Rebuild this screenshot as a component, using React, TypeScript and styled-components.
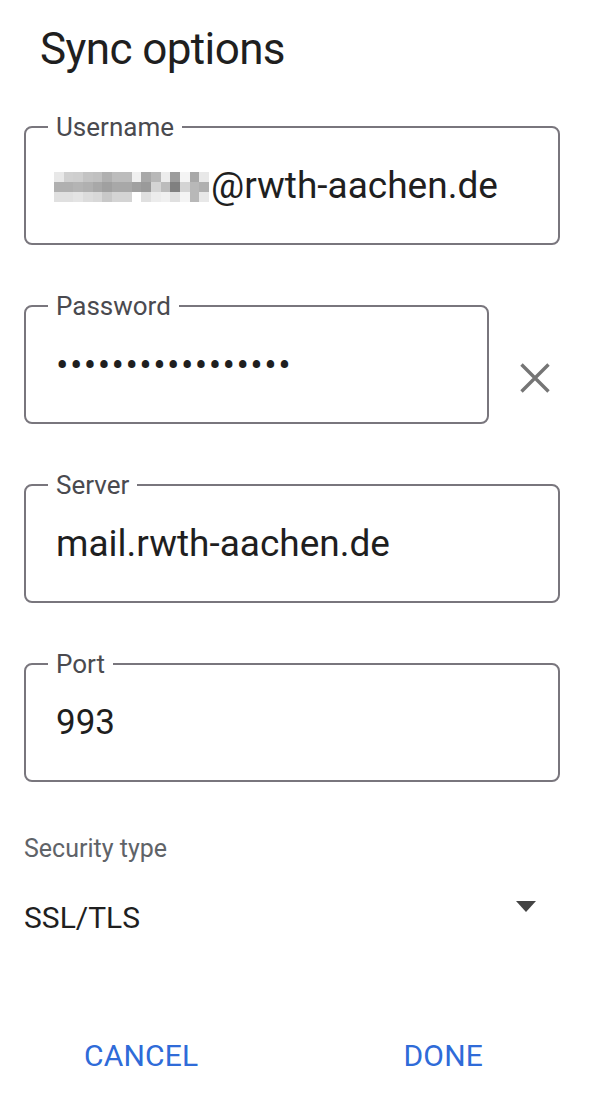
import React from 'react';
import styled, { createGlobalStyle } from 'styled-components';

const GlobalStyle = createGlobalStyle`
	html, body {
		margin: 0;
		padding: 0;
		background: #ffffff;
	}
	body {
		font-family: Roboto, "Noto Sans", "Liberation Sans", sans-serif;
		color: #1f1f1f;
	}
`;

// blurred part of the username, row by row (grey levels)
const pixelRows: string[][] = [
	['e8', 'd0', 'ce', 'c3', 'c0', 'b0', 'bc', 'bc', 'f0', 'a8', 'b8', 'ec', '9c', 'f4', 'a8', 'e8'],
	['b0', 'b0', 'b4', 'b0', 'a8', 'a0', 'a8', 'a8', 'a0', '9a', 'd4', 'bc', '80', 'd4', 'b8', 'b0'],
	['e0', 'e0', 'e4', 'dc', 'd8', 'c8', 'd4', 'd4', 'ff', 'e0', 'ec', 'f0', 'e0', 'f4', 'b8', 'e8'],
];

interface FieldProps {
	label: string;
	children: React.ReactNode;
	narrow?: boolean;
}

const Field = ({ label, children, narrow }: FieldProps): JSX.Element => {
	return (
		<FieldBox $narrow={narrow}>
			<FieldLabel>{label}</FieldLabel>
			<FieldValue>{children}</FieldValue>
		</FieldBox>
	);
};

const App = (): JSX.Element => {
	return (
		<>
			<GlobalStyle />
			<Dialog>
				<Title>Sync options</Title>
				<Fields>
					<Field label="Username">
						<Pixelated>
							{pixelRows.map((row, r) =>
								row.map((g, c) => <Pixel key={`${r}-${c}`} $grey={g} />)
							)}
						</Pixelated>
						@rwth-aachen.de
					</Field>
					<PasswordRow>
						<Field label="Password" narrow>
							<Dots>•••••••••••••••••</Dots>
						</Field>
						<ClearButton aria-label="clear">
							<svg width="32" height="32" viewBox="0 0 32 32">
								<path
									d="M2.5 2.5 L29.5 29.5 M29.5 2.5 L2.5 29.5"
									stroke="#757575"
									strokeWidth="3.4"
									fill="none"
								/>
							</svg>
						</ClearButton>
					</PasswordRow>
					<Field label="Server">mail.rwth-aachen.de</Field>
					<Field label="Port">
						<Digits>993</Digits>
					</Field>
				</Fields>
				<SecurityLabel>Security type</SecurityLabel>
				<SelectRow>
					<SelectValue>SSL/TLS</SelectValue>
					<svg width="20" height="12" viewBox="0 0 20 12">
						<path d="M0 0 L20 0 L10 11 Z" fill="#444444" />
					</svg>
				</SelectRow>
				<Actions>
					<ActionButton>CANCEL</ActionButton>
					<ActionButton>DONE</ActionButton>
				</Actions>
			</Dialog>
		</>
	);
};

export default App;

const Dialog = styled.div`
	width: 592px;
	height: 1098px;
	box-sizing: border-box;
	padding: 26px 32px 0 24px;
	display: flex;
	flex-direction: column;
`;

const Title = styled.h1`
	margin: 0 0 54px 16px;
	font-size: 44px;
	line-height: 46px;
	font-weight: 400;
	letter-spacing: -0.6px;
	color: #1f1f1f;
`;

const Fields = styled.div`
	display: flex;
	flex-direction: column;
	gap: 60px;
`;

const FieldBox = styled.div<{ $narrow?: boolean }>`
	position: relative;
	box-sizing: border-box;
	width: ${(p) => (p.$narrow ? '465px' : '536px')};
	height: 119px;
	border: 2px solid #79767d;
	border-radius: 8px;
	display: flex;
	align-items: center;
	padding: 0 30px;
`;

const FieldLabel = styled.span`
	position: absolute;
	left: 22px;
	top: -16px;
	padding: 0 8px;
	background: #ffffff;
	font-size: 26px;
	line-height: 30px;
	color: #4a4a4f;
`;

const FieldValue = styled.div`
	display: flex;
	align-items: center;
	font-size: 37px;
	line-height: 44px;
	color: #1f1f1f;
	white-space: nowrap;
`;

const Pixelated = styled.span`
	display: inline-grid;
	grid-template-columns: repeat(16, 9.7px);
	grid-auto-rows: 10px;
	margin: 2px 2px 0 -2px;
`;

const Pixel = styled.span<{ $grey: string }>`
	background: ${(p) => `#${p.$grey}${p.$grey}${p.$grey}`};
`;

const Dots = styled.span`
	letter-spacing: 1.4px;
	margin-top: 2px;
`;

const Digits = styled.span`
	font-size: 35px;
`;

const PasswordRow = styled.div`
	display: flex;
	align-items: center;
`;

const ClearButton = styled.button`
	border: none;
	background: none;
	padding: 0;
	margin: 26px 0 0 30px;
	width: 32px;
	height: 32px;
	display: flex;
	align-items: center;
	justify-content: center;
`;

const SecurityLabel = styled.div`
	margin-top: 52px;
	font-size: 25px;
	line-height: 30px;
	color: #5f6368;
`;

const SelectRow = styled.div`
	display: flex;
	align-items: center;
	justify-content: space-between;
	margin-top: 36px;
	padding-right: 24px;

	svg {
		margin-top: -22px;
	}
`;

const SelectValue = styled.span`
	font-size: 30px;
	line-height: 36px;
	color: #1f1f1f;
`;

const Actions = styled.div`
	display: flex;
	gap: 205px;
	margin-top: 102px;
	padding-left: 60px;
`;

const ActionButton = styled.span`
	font-size: 30px;
	line-height: 36px;
	color: #2f6bd8;
	font-weight: 400;
	letter-spacing: 0.2px;
`;
